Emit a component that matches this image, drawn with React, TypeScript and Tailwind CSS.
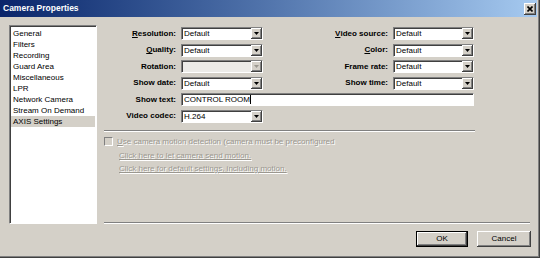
import React from "react";

const pages = [
  "General",
  "Filters",
  "Recording",
  "Guard Area",
  "Miscellaneous",
  "LPR",
  "Network Camera",
  "Stream On Demand",
  "AXIS Settings",
];

function Arrow({ disabled }: { disabled?: boolean }) {
  return (
    <div className="flex w-[11px] items-center justify-center bg-[#d4d0c8] shadow-[inset_-1px_-1px_0_#404040,inset_1px_1px_0_#ffffff,inset_-2px_-2px_0_#808080]">
      <svg width="5" height="3" viewBox="0 0 5 3">
        <path d="M0 0h5L2.5 3z" fill={disabled ? "#9a978f" : "#000"} />
      </svg>
    </div>
  );
}

function Select({ value, disabled }: { value?: string; disabled?: boolean }) {
  return (
    <div
      className={
        disabled
          ? "flex h-[13px] border border-t-[#808080] border-l-[#808080] border-r-white border-b-white bg-[#ecebe8] shadow-[inset_1px_1px_0_#404040]"
          : "flex h-[13px] border border-t-[#808080] border-l-[#808080] border-r-white border-b-white bg-white shadow-[inset_1px_1px_0_#404040]"
      }
    >
      <span className="flex-1 truncate pl-[2px] pt-[1px] text-[8px] leading-[10px] text-black">
        {value}
      </span>
      <Arrow disabled={disabled} />
    </div>
  );
}

function Label({ children }: { children: React.ReactNode }) {
  return (
    <div className="flex h-[13px] items-center justify-end text-[8px] font-bold text-black">
      {children}
    </div>
  );
}

function Button({ children, primary }: { children: React.ReactNode; primary?: boolean }) {
  return (
    <div
      className={
        primary
          ? "flex h-[16px] w-[52px] items-center justify-center border border-black bg-[#d4d0c8] text-[8px] shadow-[inset_-1px_-1px_0_#404040,inset_1px_1px_0_#ffffff,inset_-2px_-2px_0_#808080]"
          : "flex h-[16px] w-[54px] items-center justify-center bg-[#d4d0c8] text-[8px] shadow-[inset_-1px_-1px_0_#404040,inset_1px_1px_0_#ffffff,inset_-2px_-2px_0_#808080]"
      }
    >
      {children}
    </div>
  );
}

export default function App() {
  return (
    <div className="flex h-[258px] w-[540px] flex-col overflow-hidden bg-[#d4d0c8] font-['Liberation_Sans',Arial,sans-serif] text-black shadow-[inset_-1px_-1px_0_#404040,inset_-2px_-2px_0_#808080]">
      {/* Title bar */}
      <div className="mr-[3px] flex h-[17px] items-center justify-between bg-gradient-to-r from-[#0a246a] to-[#a6caf0] pl-[3px] pr-[1px]">
        <span className="text-[8.5px] font-bold text-white">Camera Properties</span>
        <div className="flex h-[12px] w-[12px] items-center justify-center bg-[#d4d0c8] shadow-[inset_-1px_-1px_0_#404040,inset_1px_1px_0_#ffffff,inset_-2px_-2px_0_#808080]">
          <svg width="6" height="6" viewBox="0 0 6 6">
            <path d="M0.5 0.5L5.5 5.5M5.5 0.5L0.5 5.5" stroke="#000" strokeWidth="1.6" />
          </svg>
        </div>
      </div>

      <div className="flex gap-[7px] pl-[9px] pt-[8px]">
        {/* Page list */}
        <div className="h-[199px] w-[88px] border border-t-[#808080] border-l-[#808080] border-r-white border-b-white bg-white pt-[2px] shadow-[inset_1px_1px_0_#404040]">
          {pages.map((p) => (
            <div
              key={p}
              className={
                p === "AXIS Settings"
                  ? "ml-[1px] mr-[1px] h-[11px] bg-[#d4d0c8] pl-[2px] text-[8px] leading-[11px]"
                  : "ml-[1px] mr-[1px] h-[11px] pl-[2px] text-[8px] leading-[11px]"
              }
            >
              {p}
            </div>
          ))}
        </div>

        {/* Settings panel */}
        <div className="flex h-[199px] w-[426px] flex-col">
          <div className="mt-[2px] grid grid-cols-[72px_82px_120px_81px] gap-x-[5px] gap-y-[3.6px]">
            <Label>
              <span className="underline">R</span>esolution:
            </Label>
            <Select value="Default" />
            <Label>
              <span className="underline">V</span>ideo source:
            </Label>
            <Select value="Default" />

            <Label>
              <span className="underline">Q</span>uality:
            </Label>
            <Select value="Default" />
            <Label>
              <span className="underline">C</span>olor:
            </Label>
            <Select value="Default" />

            <Label>Rotation:</Label>
            <Select disabled />
            <Label>Frame rate:</Label>
            <Select value="Default" />

            <Label>Show date:</Label>
            <Select value="Default" />
            <Label>Show time:</Label>
            <Select value="Default" />

            <Label>Show text:</Label>
            <div className="col-span-3 flex h-[13px] border border-t-[#808080] border-l-[#808080] border-r-white border-b-white bg-white shadow-[inset_1px_1px_0_#404040]">
              <span className="pl-[2px] pt-[1px] text-[8px] leading-[10px]">CONTROL ROOM</span>
              <span className="mt-[1px] h-[9px] w-px bg-black" />
            </div>

            <Label>Video codec:</Label>
            <Select value="H.264" />
          </div>

          <div className="mt-[7px] h-[2px] w-[371px] border-t border-t-[#808080] border-b border-b-white" />

          <div className="mt-[5px] flex items-center gap-[4px]">
            <div className="h-[9px] w-[9px] border border-t-[#808080] border-l-[#808080] border-r-white border-b-white bg-[#d4d0c8]" />
            <span className="text-[8px] leading-[9px] text-[#9a978f] [text-shadow:1px_1px_0_#ffffff]">
              <span className="underline">U</span>se camera motion detection (camera must be preconfigured
            </span>
          </div>
          <div className="mt-[4px] pl-[15px] text-[8px] leading-[11px] text-[#9a978f] underline [text-shadow:1px_1px_0_#ffffff]">
            Click here to let camera send motion.
          </div>
          <div className="mt-[2px] pl-[15px] text-[8px] leading-[11px] text-[#9a978f] underline [text-shadow:1px_1px_0_#ffffff]">
            Click here for default settings, including motion.
          </div>

          <div className="flex-1" />
          <div className="h-[2px] w-full border-t border-t-[#808080] border-b border-b-white" />
        </div>
      </div>

      <div className="mt-[7px] flex justify-end gap-[9px] pr-[9px]">
        <Button primary>OK</Button>
        <Button>Cancel</Button>
      </div>
    </div>
  );
}
